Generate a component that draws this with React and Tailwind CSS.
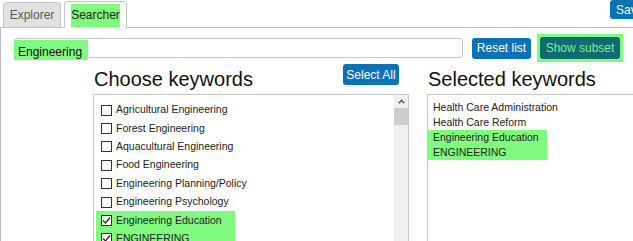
import React from 'react';

const leftItems = [
  { label: 'Agricultural Engineering', checked: false },
  { label: 'Forest Engineering', checked: false },
  { label: 'Aquacultural Engineering', checked: false },
  { label: 'Food Engineering', checked: false },
  { label: 'Engineering Planning/Policy', checked: false },
  { label: 'Engineering Psychology', checked: false },
];

const pickedLeft = ['Engineering Education', 'ENGINEERING'];

function Box({ checked }) {
  return (
    <span className="w-[11px] h-[11px] border border-[#333] bg-white flex items-center justify-center shrink-0">
      {checked && (
        <svg width="9" height="9" viewBox="0 0 9 9">
          <path d="M1 4.5 L3.5 7 L8 1.5" fill="none" stroke="#222" strokeWidth="1.2" />
        </svg>
      )}
    </span>
  );
}

function Item({ label, checked }) {
  return (
    <div className="h-[18.4px] flex items-center gap-[4px] pl-[5px] text-[10.5px] text-[#222]">
      <Box checked={checked} />
      <span>{label}</span>
    </div>
  );
}

export default function App() {
  return (
    <div className="w-[633px] h-[241px] overflow-hidden bg-white font-['Liberation_Sans',Arial,sans-serif]">
      {/* tabs */}
      <div className="flex h-[28px] pl-[3px]">
        <div className="mt-[2px] h-[25px] w-[58px] border border-b-0 border-[#c5c5c5] rounded-t-[4px] bg-[#e1e1e1] text-[#5a5a5a] text-[12px] flex items-center justify-center">
          Explorer
        </div>
        <div className="relative z-10 ml-[3px] mt-[1px] h-[27px] w-[63px] border border-b-0 border-[#c5c5c5] rounded-t-[4px] bg-white flex items-center justify-center">
          <span className="h-[23px] w-[49px] bg-[#80fb80] text-[12px] text-[#1a1a1a] flex items-center justify-center">Searcher</span>
        </div>
        <button className="ml-auto mr-[-17px] self-start h-[19px] w-[40px] rounded-[3px] bg-[#0c72b6] text-white text-[12px] text-left pl-[6px]">
          Save
        </button>
      </div>

      {/* panel */}
      <div className="-mt-px border-t border-l border-[#c0c0c0] h-[214px]">
        <div className="flex items-center pt-[6px] pl-[13px]">
          <div className="relative w-[449px] h-[20px] border border-[#c8c8c8] rounded-[3px] bg-white">
            <span className="absolute -left-px top-[1px] h-[20px] w-[74px] bg-[#80fb80]" />
            <span className="relative pl-[3px] leading-[18px] text-[12px] text-[#111]">Engineering</span>
          </div>
          <button className="ml-[9px] h-[21px] w-[59px] rounded-[3px] bg-[#0c72b6] text-white text-[12px]">
            Reset list
          </button>
          <div className="ml-[6px] p-[3px] bg-[#80fb80]">
            <button className="h-[22px] w-[80px] rounded-[3px] bg-[#0e6b73] text-[#86e896] text-[12px] block">
              Show subset
            </button>
          </div>
        </div>

        <div className="flex pl-[92px]">
          {/* choose column */}
          <div className="w-[316px] shrink-0">
            <div className="flex items-start">
              <h2 className="mt-[5px] pl-px text-[20px] leading-[24px] text-[#111]">Choose keywords</h2>
              <button className="ml-auto mr-[10px] mt-[2px] h-[21px] w-[56px] rounded-[3px] bg-[#0c72b6] text-white text-[12px]">
                Select All
              </button>
            </div>
            <div className="mt-[3px] h-[160px] border border-[#c8c8c8] flex">
              <div className="flex-1 pt-[6px] pl-[2px]">
                {leftItems.map(it => (
                  <Item key={it.label} {...it} />
                ))}
                <div className="w-[139px] bg-[#80fb80]">
                  {pickedLeft.map(l => (
                    <Item key={l} label={l} checked />
                  ))}
                </div>
              </div>
              <div className="w-[14px] bg-[#f0f0f0] flex flex-col items-center">
                <div className="h-[13px] flex items-center justify-center">
                  <svg width="7" height="5" viewBox="0 0 7 5">
                    <path d="M0.8 4.2 L3.5 1.2 L6.2 4.2" fill="none" stroke="#505050" strokeWidth="1.3" />
                  </svg>
                </div>
                <div className="w-[14px] h-[17px] bg-[#cdcdcd]" />
              </div>
            </div>
          </div>

          {/* selected column */}
          <div className="ml-[18px] w-[220px] shrink-0">
            <h2 className="mt-[5px] pl-px text-[20px] leading-[24px] text-[#111]">Selected keywords</h2>
            <div className="mt-[3px] h-[160px] border border-[#c8c8c8] pt-[4.5px] text-[10.5px] text-[#222] leading-[15px]">
              <div className="pl-[5px]">Health Care Administration</div>
              <div className="pl-[5px]">Health Care Reform</div>
              <div className="w-[119px] bg-[#80fb80]">
                <div className="pl-[5px]">Engineering Education</div>
                <div className="pl-[5px]">ENGINEERING</div>
              </div>
            </div>
          </div>
        </div>
      </div>
    </div>
  );
}
